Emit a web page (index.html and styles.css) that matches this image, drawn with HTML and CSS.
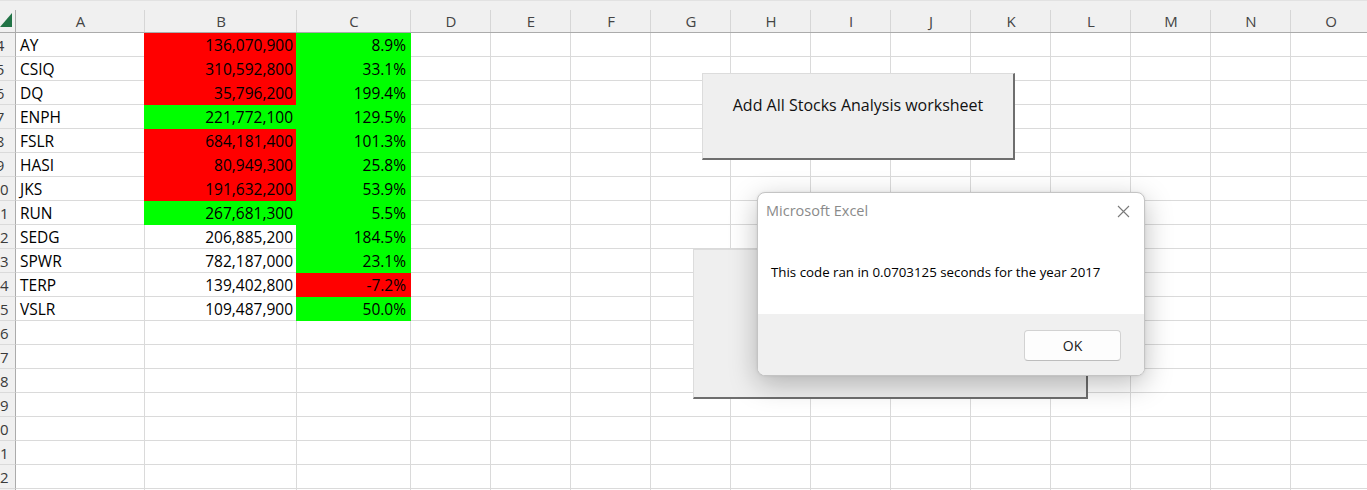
FILE: index.html
```html
<!DOCTYPE html>
<html>
<head>
<meta charset="utf-8">
<title>Excel</title>
<link rel="stylesheet" href="styles.css">
</head>
<body>
<div class="page">
  <div class="sheet">
    <div class="row head">
      <div class="corner"><svg width="13" height="15" viewBox="0 0 13 15"><polygon points="12,0 12,14 0,14" fill="#217346"/></svg></div>
      <div>A</div><div>B</div><div>C</div><div>D</div><div>E</div><div>F</div><div>G</div><div>H</div><div>I</div><div>J</div><div>K</div><div>L</div><div>M</div><div>N</div><div>O</div>
    </div>
    <div class="row"><div class="rh"><span>4</span></div><div>AY</div><div class="num red">136,070,900</div><div class="pct green">8.9%</div><span></span><span></span><span></span><span></span><span></span><span></span><span></span><span></span><span></span><span></span><span></span><span></span></div>
    <div class="row"><div class="rh"><span>5</span></div><div>CSIQ</div><div class="num red">310,592,800</div><div class="pct green">33.1%</div><span></span><span></span><span></span><span></span><span></span><span></span><span></span><span></span><span></span><span></span><span></span><span></span></div>
    <div class="row"><div class="rh"><span>6</span></div><div>DQ</div><div class="num red">35,796,200</div><div class="pct green">199.4%</div><span></span><span></span><span></span><span></span><span></span><span></span><span></span><span></span><span></span><span></span><span></span><span></span></div>
    <div class="row"><div class="rh"><span>7</span></div><div>ENPH</div><div class="num green">221,772,100</div><div class="pct green">129.5%</div><span></span><span></span><span></span><span></span><span></span><span></span><span></span><span></span><span></span><span></span><span></span><span></span></div>
    <div class="row"><div class="rh"><span>8</span></div><div>FSLR</div><div class="num red">684,181,400</div><div class="pct green">101.3%</div><span></span><span></span><span></span><span></span><span></span><span></span><span></span><span></span><span></span><span></span><span></span><span></span></div>
    <div class="row"><div class="rh"><span>9</span></div><div>HASI</div><div class="num red">80,949,300</div><div class="pct green">25.8%</div><span></span><span></span><span></span><span></span><span></span><span></span><span></span><span></span><span></span><span></span><span></span><span></span></div>
    <div class="row"><div class="rh"><span>10</span></div><div>JKS</div><div class="num red">191,632,200</div><div class="pct green">53.9%</div><span></span><span></span><span></span><span></span><span></span><span></span><span></span><span></span><span></span><span></span><span></span><span></span></div>
    <div class="row"><div class="rh"><span>11</span></div><div>RUN</div><div class="num green">267,681,300</div><div class="pct green">5.5%</div><span></span><span></span><span></span><span></span><span></span><span></span><span></span><span></span><span></span><span></span><span></span><span></span></div>
    <div class="row"><div class="rh"><span>12</span></div><div>SEDG</div><div class="num">206,885,200</div><div class="pct green">184.5%</div><span></span><span></span><span></span><span></span><span></span><span></span><span></span><span></span><span></span><span></span><span></span><span></span></div>
    <div class="row"><div class="rh"><span>13</span></div><div>SPWR</div><div class="num">782,187,000</div><div class="pct green">23.1%</div><span></span><span></span><span></span><span></span><span></span><span></span><span></span><span></span><span></span><span></span><span></span><span></span></div>
    <div class="row"><div class="rh"><span>14</span></div><div>TERP</div><div class="num">139,402,800</div><div class="pct red">-7.2%</div><span></span><span></span><span></span><span></span><span></span><span></span><span></span><span></span><span></span><span></span><span></span><span></span></div>
    <div class="row"><div class="rh"><span>15</span></div><div>VSLR</div><div class="num">109,487,900</div><div class="pct green">50.0%</div><span></span><span></span><span></span><span></span><span></span><span></span><span></span><span></span><span></span><span></span><span></span><span></span></div>
    <div class="row"><div class="rh"><span>16</span></div><span></span><span></span><span></span><span></span><span></span><span></span><span></span><span></span><span></span><span></span><span></span><span></span><span></span><span></span><span></span></div>
    <div class="row"><div class="rh"><span>17</span></div><span></span><span></span><span></span><span></span><span></span><span></span><span></span><span></span><span></span><span></span><span></span><span></span><span></span><span></span><span></span></div>
    <div class="row"><div class="rh"><span>18</span></div><span></span><span></span><span></span><span></span><span></span><span></span><span></span><span></span><span></span><span></span><span></span><span></span><span></span><span></span><span></span></div>
    <div class="row"><div class="rh"><span>19</span></div><span></span><span></span><span></span><span></span><span></span><span></span><span></span><span></span><span></span><span></span><span></span><span></span><span></span><span></span><span></span></div>
    <div class="row"><div class="rh"><span>20</span></div><span></span><span></span><span></span><span></span><span></span><span></span><span></span><span></span><span></span><span></span><span></span><span></span><span></span><span></span><span></span></div>
    <div class="row"><div class="rh"><span>21</span></div><span></span><span></span><span></span><span></span><span></span><span></span><span></span><span></span><span></span><span></span><span></span><span></span><span></span><span></span><span></span></div>
    <div class="row"><div class="rh"><span>22</span></div><span></span><span></span><span></span><span></span><span></span><span></span><span></span><span></span><span></span><span></span><span></span><span></span><span></span><span></span><span></span></div>
    <div class="row"><div class="rh"><span>23</span></div><span></span><span></span><span></span><span></span><span></span><span></span><span></span><span></span><span></span><span></span><span></span><span></span><span></span><span></span><span></span></div>
  </div>

  <div class="shape-btn btn-add">Add All Stocks Analysis worksheet</div>
  <div class="shape-btn btn-run"></div>

  <div class="dialog">
    <div class="dlg-body">
      <div class="dlg-title">
        <span>Microsoft Excel</span>
        <svg class="dlg-close" width="13" height="13" viewBox="0 0 13 13"><path d="M1 1 L12 12 M12 1 L1 12" stroke="#7a7a7a" stroke-width="1.1" fill="none"/></svg>
      </div>
      <div class="dlg-msg">This code ran in 0.0703125 seconds for the year 2017</div>
    </div>
    <div class="dlg-foot">
      <div class="ok-btn">OK</div>
    </div>
  </div>
</div>
</body>
</html>
```

FILE: styles.css
```css
* {
  box-sizing: border-box;
  margin: 0;
  padding: 0;
}

body {
  margin: 0;
  background: #ffffff;
  overflow: hidden;
  font-family: "Open Sans", "Liberation Sans", sans-serif;
}

.page {
  position: relative;
  width: 1367px;
  height: 490px;
  overflow: hidden;
}

.sheet {
  border-top: 1px solid #e2e2e2;
}

.row {
  display: grid;
  grid-template-columns: 16px 129px 152px 114px repeat(12, 80px);
  height: 24px;
}

.row > * {
  display: block;
  height: 24px;
  border-right: 1px solid #dadada;
  border-bottom: 1px solid #dadada;
  font-size: 15.5px;
  line-height: 21px;
  padding: 2px 3px 0 4px;
  white-space: nowrap;
  overflow: hidden;
  color: #000;
}

.row.head {
  height: 32px;
  background: #f0f0f0;
}

.row.head > * {
  height: 32px;
  border-right: none;
  border-bottom: 1px solid #ababab;
  background: linear-gradient(#d6d6d6, #d6d6d6) right bottom / 1px 22px no-repeat;
  text-align: center;
  color: #444;
  font-size: 15px;
  padding: 10px 0 0 0;
  line-height: 21px;
}

.row.head > .corner {
  padding: 12px 0 0 0;
  background: linear-gradient(#ababab, #ababab) right bottom / 1px 22px no-repeat;
}

.corner svg {
  display: block;
}

.row > .rh {
  background: #f0f0f0;
  border-right: 1px solid #ababab;
  border-bottom: 1px solid #dadada;
  padding: 2px 0 0 0;
  color: #3a3a3a;
  font-size: 15px;
}

.rh span {
  display: block;
  width: 32px;
  margin-left: -16px;
  text-align: center;
}

.row > .num {
  text-align: right;
  padding-right: 3px;
}

.row > .pct {
  text-align: right;
  padding-right: 4px;
}

.row > .red {
  background: #ff0000;
  border-color: #ff0000;
  box-shadow: -1px 0 0 #ff0000;
}

.row > .green {
  background: #00ff00;
  border-color: #00ff00;
  box-shadow: -1px 0 0 #00ff00;
}

/* sheet button shapes (float over the grid) */
.shape-btn {
  position: absolute;
  background: #efefef;
  border-top: 1px solid #dcdcdc;
  border-left: 1px solid #dcdcdc;
  border-right: 2px solid #6e6e6e;
  border-bottom: 2px solid #6e6e6e;
  text-align: center;
  color: #111;
  font-size: 16px;
  line-height: 21px;
}

.btn-add {
  left: 702px;
  top: 73px;
  width: 313px;
  height: 87px;
  padding-top: 21px;
}

.btn-run {
  left: 693px;
  top: 249px;
  width: 395px;
  height: 150px;
}

/* message box */
.dialog {
  position: absolute;
  left: 757px;
  top: 192px;
  width: 388px;
  height: 184px;
  background: #ffffff;
  border: 1px solid #c4c4c4;
  border-radius: 8px;
  overflow: hidden;
  display: flex;
  flex-direction: column;
  box-shadow: 0 8px 28px rgba(0, 0, 0, 0.26), 0 0 3px rgba(0, 0, 0, 0.08);
}

.dlg-body {
  flex: 1;
}

.dlg-title {
  display: flex;
  justify-content: space-between;
  align-items: flex-start;
  padding: 8px 14px 0 8px;
  font-size: 14.5px;
  line-height: 20px;
  color: #8a8a8a;
}

.dlg-close {
  display: block;
  margin-top: 4px;
}

.dlg-msg {
  padding: 42px 0 0 13px;
  font-size: 13.3px;
  line-height: 18px;
  color: #000;
}

.dlg-foot {
  height: 61px;
  background: #f0f0f0;
  display: flex;
  justify-content: flex-end;
  padding: 16px 23px 0 0;
}

.ok-btn {
  width: 97px;
  height: 31px;
  background: #fdfdfd;
  border: 1px solid #d2d2d2;
  border-bottom-color: #bdbdbd;
  border-radius: 4px;
  text-align: center;
  font-size: 14px;
  line-height: 29px;
  color: #1a1a1a;
}
```
